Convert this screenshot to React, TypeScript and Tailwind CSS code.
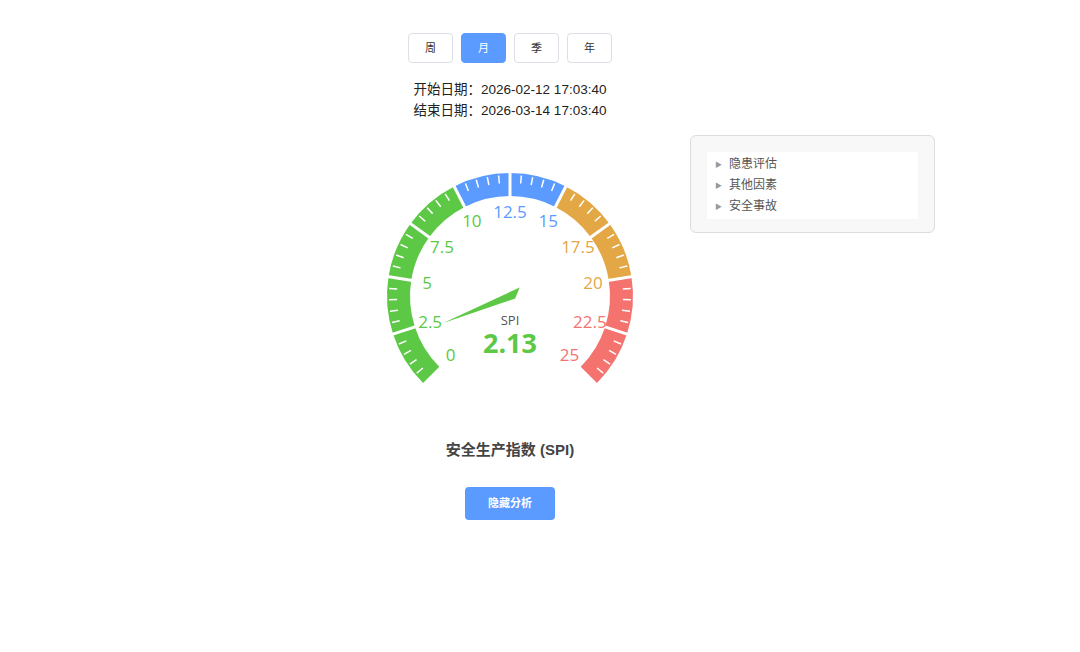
import React from 'react';

const CX = 150;
const CY = 150;
const R_OUT = 123;
const R_IN = 100;

const segColors = ['#5cc845', '#5cc845', '#5cc845', '#5cc845', '#5b9bff', '#5b9bff', '#e3a745', '#e3a745', '#f4736f', '#f4736f'];
const labelColor = (v: number) => (v <= 10 ? '#5cc845' : v <= 15 ? '#5b9bff' : v <= 20 ? '#e3a745' : '#f4736f');

const ang = (v: number) => ((225 - (v / 25) * 270) * Math.PI) / 180;
const pt = (v: number, r: number) => [CX + r * Math.cos(ang(v)), CY - r * Math.sin(ang(v))];

function arcPath(v0: number, v1: number) {
  const [x0, y0] = pt(v0, R_OUT);
  const [x1, y1] = pt(v1, R_OUT);
  const [x2, y2] = pt(v1, R_IN);
  const [x3, y3] = pt(v0, R_IN);
  return `M${x0} ${y0} A${R_OUT} ${R_OUT} 0 0 1 ${x1} ${y1} L${x2} ${y2} A${R_IN} ${R_IN} 0 0 0 ${x3} ${y3} Z`;
}

function Gauge() {
  const value = 2.13;
  const ticks: number[] = [];
  for (let i = 0; i <= 50; i++) if (i % 5 !== 0) ticks.push(i * 0.5);
  const labels = [0, 2.5, 5, 7.5, 10, 12.5, 15, 17.5, 20, 22.5, 25];
  const [tx, ty] = pt(value, 72);
  const a = ang(value);
  const px = Math.sin(a) * 6, py = Math.cos(a) * 6;
  const [bx, by] = pt(value, -8);
  return (
    <svg width="300" height="265" viewBox="0 0 300 265">
      {segColors.map((c, i) => (
        <path key={i} d={arcPath(i * 2.5, (i + 1) * 2.5)} fill={c} />
      ))}
      {labels.slice(1, -1).map((v) => {
        const [x0, y0] = pt(v, R_IN - 1);
        const [x1, y1] = pt(v, R_OUT + 1);
        return <line key={v} x1={x0} y1={y0} x2={x1} y2={y1} stroke="#fff" strokeWidth="3" />;
      })}
      {ticks.map((v) => {
        const [x0, y0] = pt(v, R_OUT - 2);
        const [x1, y1] = pt(v, R_OUT - 10);
        return <line key={v} x1={x0} y1={y0} x2={x1} y2={y1} stroke="#fff" strokeWidth="1.5" />;
      })}
      {labels.map((v) => {
        const [x, y] = pt(v, 84);
        return (
          <text key={v} x={x} y={y + 6} textAnchor="middle" fontSize="17" fill={labelColor(v)} fontFamily="'Open Sans', sans-serif">
            {v}
          </text>
        );
      })}
      <polygon points={`${tx},${ty} ${bx + px},${by - py} ${bx - px},${by + py}`} fill="#5cc845" />
      <text x={CX} y={CY + 29} textAnchor="middle" fontSize="13" fill="#555" fontFamily="'Open Sans', sans-serif">SPI</text>
      <text x={CX} y={CY + 57} textAnchor="middle" fontSize="27" fontWeight="bold" fill="#5cc845" fontFamily="'Open Sans', sans-serif">2.13</text>
    </svg>
  );
}

export default function App() {
  const tabs = ['周', '月', '季', '年'];
  return (
    <div className="w-[1080px] h-[652px] bg-white flex pl-[360px] text-[#333]" style={{ fontFamily: "'Liberation Sans', 'Noto Sans CJK SC', sans-serif" }}>
      <div className="w-[300px] flex flex-col items-center pt-[33px]">
        <div className="flex gap-[8px]">
          {tabs.map((t) => (
            <button
              key={t}
              className={`w-[45px] h-[30px] rounded text-[11px] border ${t === '月' ? 'bg-[#5b9bff] border-[#5b9bff] text-white' : 'bg-white border-[#dcdfe6] text-[#333]'}`}
            >
              {t}
            </button>
          ))}
        </div>
        <div className="mt-[16px] text-[13.5px] leading-[21px] text-[#222]">
          <div>开始日期：2026-02-12 17:03:40</div>
          <div>结束日期：2026-03-14 17:03:40</div>
        </div>
        <div className="mt-[25px]">
          <Gauge />
        </div>
        <div className="mt-[28px] text-[15px] font-bold text-[#444]">安全生产指数 (SPI)</div>
        <button className="mt-[25px] w-[90px] h-[33px] rounded bg-[#5b9bff] text-white text-[11px] font-bold">隐藏分析</button>
      </div>
      <div className="ml-[30px] mt-[135px] w-[245px] h-[98px] rounded-md border border-[#ddd] bg-[#f8f8f8] px-[16px] pt-[16px]">
        <div className="bg-white px-[8px] py-[2px] text-[12px] text-[#555] leading-[21px]">
          {['隐患评估', '其他因素', '安全事故'].map((t) => (
            <div key={t} className="flex items-center gap-[7px]">
              <span className="text-[7px] text-[#999]">▶</span>
              {t}
            </div>
          ))}
        </div>
      </div>
    </div>
  );
}
